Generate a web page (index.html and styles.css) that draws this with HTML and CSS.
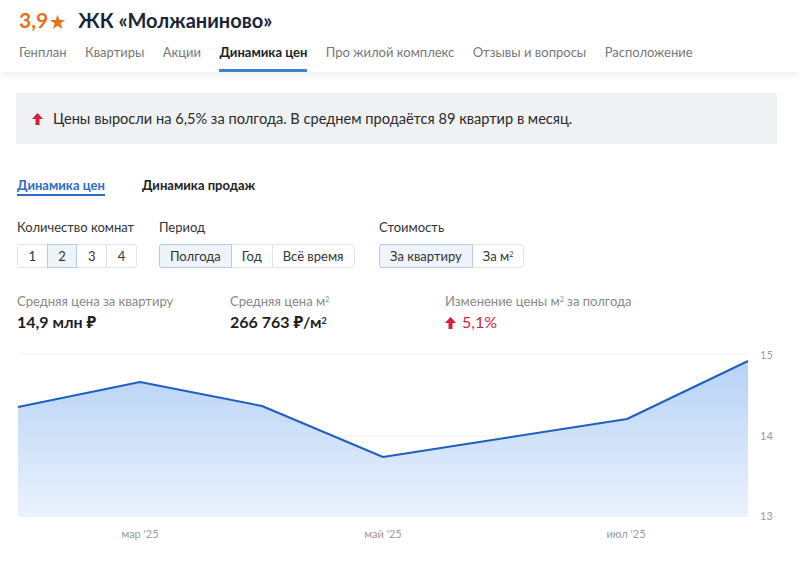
FILE: index.html
```html
<!DOCTYPE html>
<html lang="ru">
<head>
<meta charset="utf-8">
<link rel="stylesheet" href="styles.css">
</head>
<body>
<header class="header">
  <h1 class="title"><span class="rating">3,9<span class="star">★</span></span><span class="name">ЖК «Молжаниново»</span></h1>
  <nav class="nav">
    <a class="nav-item">Генплан</a>
    <a class="nav-item">Квартиры</a>
    <a class="nav-item">Акции</a>
    <a class="nav-item active">Динамика цен</a>
    <a class="nav-item">Про жилой комплекс</a>
    <a class="nav-item">Отзывы и вопросы</a>
    <a class="nav-item">Расположение</a>
  </nav>
</header>
<main class="main">
  <div class="alert">
    <svg class="up-icon" width="11" height="12" viewBox="0 0 11 12"><path d="M5.5 0 L11 6 L7.5 6 L7.5 12 L3.5 12 L3.5 6 L0 6 Z" fill="#d21f3c"/></svg>
    <span>Цены выросли на 6,5% за полгода. В среднем продаётся 89 квартир в месяц.</span>
  </div>
  <div class="subtabs">
    <span class="subtab active">Динамика цен</span>
    <span class="subtab">Динамика продаж</span>
  </div>
  <div class="filters">
    <div class="filter f1">
      <div class="filter-label">Количество комнат</div>
      <div class="group">
        <span class="btn num">1</span><span class="btn num sel">2</span><span class="btn num">3</span><span class="btn num">4</span>
      </div>
    </div>
    <div class="filter f2">
      <div class="filter-label">Период</div>
      <div class="group">
        <span class="btn sel">Полгода</span><span class="btn">Год</span><span class="btn">Всё время</span>
      </div>
    </div>
    <div class="filter">
      <div class="filter-label">Стоимость</div>
      <div class="group">
        <span class="btn sel">За квартиру</span><span class="btn">За м<sup>2</sup></span>
      </div>
    </div>
  </div>
  <div class="stats">
    <div class="stat s1">
      <div class="stat-label">Средняя цена за квартиру</div>
      <div class="stat-value">14,9 млн ₽</div>
    </div>
    <div class="stat s2">
      <div class="stat-label">Средняя цена м<sup>2</sup></div>
      <div class="stat-value">266 763 ₽/м<sup>2</sup></div>
    </div>
    <div class="stat s3">
      <div class="stat-label">Изменение цены м<sup>2</sup> за полгода</div>
      <div class="stat-value red"><svg class="up-icon inline" width="11" height="12" viewBox="0 0 11 12"><path d="M5.5 0 L11 6 L7.5 6 L7.5 12 L3.5 12 L3.5 6 L0 6 Z" fill="#d21f3c"/></svg>5,1%</div>
    </div>
  </div>
  <div class="chart">
    <svg width="784" height="200" viewBox="0 0 784 200">
      <defs>
        <linearGradient id="fill" x1="0" y1="0" x2="0" y2="1">
          <stop offset="0" stop-color="#b6d2f6"/>
          <stop offset="1" stop-color="#eaf2fd"/>
        </linearGradient>
      </defs>
      <line x1="2" y1="9" x2="732" y2="9" stroke="#f0f0f0" stroke-width="1"/>
      <line x1="2" y1="91" x2="732" y2="91" stroke="#f0f0f0" stroke-width="1"/>
      <path d="M2 62 L124 37 L246 61 L367 112 L489 93 L611 74 L732 16 L732 172 L2 172 Z" fill="url(#fill)"/>
      <path d="M2 62 L124 37 L246 61 L367 112 L489 93 L611 74 L732 16" fill="none" stroke="#1f5fc0" stroke-width="2" stroke-linejoin="round"/>
      <text x="744" y="14" class="axis">15</text>
      <text x="744" y="95" class="axis">14</text>
      <text x="744" y="175" class="axis">13</text>
      <text x="124" y="193" class="axis" text-anchor="middle">мар '25</text>
      <text x="367" y="193" class="axis" text-anchor="middle">май '25</text>
      <text x="610" y="193" class="axis" text-anchor="middle">июл '25</text>
    </svg>
  </div>
</main>
</body>
</html>
```

FILE: styles.css
```css
* { box-sizing: border-box; }
body {
  margin: 0;
  font-family: Lato, "Noto Sans", sans-serif;
  color: #333;
  background: #fff;
}
sup { font-size: 0.55em; vertical-align: top; position: relative; top: -0.1em; }
.header {
  padding: 8px 19px 0;
  box-shadow: 0 2px 8px rgba(0,0,0,0.07);
  position: relative;
}
.title {
  margin: 0;
  font-size: 20px;
  line-height: 24px;
  font-weight: 700;
  display: flex;
  gap: 13px;
}
.rating { color: #e2731d; font-size: 21px; }
.star { font-size: 17px; margin-left: 2px; }
.name { color: #1b2539; }
.nav {
  display: flex;
  gap: 18.4px;
  margin-top: 10px;
}
.nav-item {
  font-size: 13px;
  line-height: 16px;
  color: #777;
  padding-bottom: 9px;
  border-bottom: 3px solid transparent;
}
.nav-item.active {
  color: #222;
  font-weight: 700;
  border-bottom-color: #3b82d0;
}
.main { padding: 21px 23px 0 16px; }
.alert {
  height: 51px;
  background: #f0f1f3;
  display: flex;
  align-items: center;
  gap: 10px;
  padding-left: 16px;
  font-size: 14.6px;
  color: #2a2a2a;
}
.subtabs {
  display: flex;
  gap: 37px;
  margin-top: 33px;
  padding-left: 1px;
}
.subtab {
  font-size: 13px;
  font-weight: 700;
  line-height: 16px;
  color: #222;
  padding-bottom: 1px;
  border-bottom: 2px solid transparent;
}
.subtab.active { color: #2b6cc4; border-bottom-color: #2b6cc4; }
.filters {
  display: flex;
  margin-top: 23px;
  padding-left: 1px;
}
.f1 { width: 142px; }
.f2 { width: 220px; }
.filter-label { font-size: 13px; line-height: 16px; color: #333; margin-bottom: 9px; }
.group { display: flex; }
.btn {
  font-size: 13px;
  line-height: 22px;
  height: 24px;
  padding: 0 10px;
  border: 1px solid #e3e3e3;
  color: #333;
  margin-left: -1px;
}
.btn:first-child { margin-left: 0; border-radius: 3px 0 0 3px; }
.btn:last-child { border-radius: 0 3px 3px 0; }
.btn.num { width: 30.7px; padding: 0; text-align: center; }
.btn.sel { background: #eef4fa; border-color: #b6cbe2; position: relative; }
.stats {
  display: flex;
  margin-top: 25px;
  padding-left: 1px;
}
.s1 { width: 213px; }
.s2 { width: 215px; }
.stat-label { font-size: 13px; line-height: 16px; color: #888; }
.stat-value {
  font-size: 16px;
  font-weight: 700;
  line-height: 20px;
  color: #1f1f1f;
  margin-top: 3px;
}
.stat-value sup { font-size: 9px; top: -1px; }
.stat-value.red { color: #d21f3c; font-weight: 400; }
.up-icon.inline { display: inline-block; vertical-align: -1px; margin-right: 6px; }
.chart { margin-top: 13px; }
.chart svg { display: block; }
.axis { font-family: Lato, "Noto Sans", sans-serif; font-size: 11px; fill: #9a9a9a; }
```
